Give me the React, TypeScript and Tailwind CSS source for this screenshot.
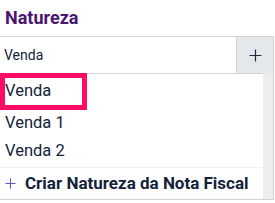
export default function App() {
  const font = { fontFamily: 'Roboto, "Noto Sans", sans-serif' };
  return (
    <div className="w-[275px] h-[203px] bg-white text-[#13233a]" style={font}>
      <div className="h-[36px] pl-[5px] pt-[7px] text-[18px] font-bold leading-[22px] text-[#4a1570]">
        Natureza
      </div>
      <div className="flex h-[38px] w-[274px] border-y border-r border-[#cdd4da]">
        <div className="flex flex-1 items-center pl-[4px] text-[14px]">Venda</div>
        <button className="flex w-[37px] items-center justify-center border-l border-[#cdd4da] bg-[#e4e8eb]">
          <svg width="13" height="13" viewBox="0 0 13 13">
            <path d="M6.5 0.5V12.5M0.5 6.5H12.5" stroke="#1b2d45" strokeWidth="1.2" />
          </svg>
        </button>
      </div>
      <div className="-mt-px flex h-[127px] w-[274px] border-b border-r border-[#cdd4da]">
        <ul className="flex flex-1 flex-col text-[16.5px]">
          <li className="flex h-[37px] w-[87px] items-center border-[5px] border-[#ff0a64] pl-0">
            Venda
          </li>
          <li className="flex h-[26px] items-center pl-[5px]">Venda 1</li>
          <li className="flex h-[31px] items-center pl-[5px]">Venda 2</li>
          <li className="flex flex-1 items-center gap-[9px] border-t border-[#f2f2f2] pl-[5px] text-[17px] font-bold">
            <svg width="11" height="11" viewBox="0 0 11 11">
              <path d="M5.5 0.5V10.5M0.5 5.5H10.5" stroke="#6b4fb8" strokeWidth="1.1" />
            </svg>
            <span>Criar Natureza da Nota Fiscal</span>
          </li>
        </ul>
        <div className="w-[10px] bg-[#ededed]" />
      </div>
    </div>
  );
}
